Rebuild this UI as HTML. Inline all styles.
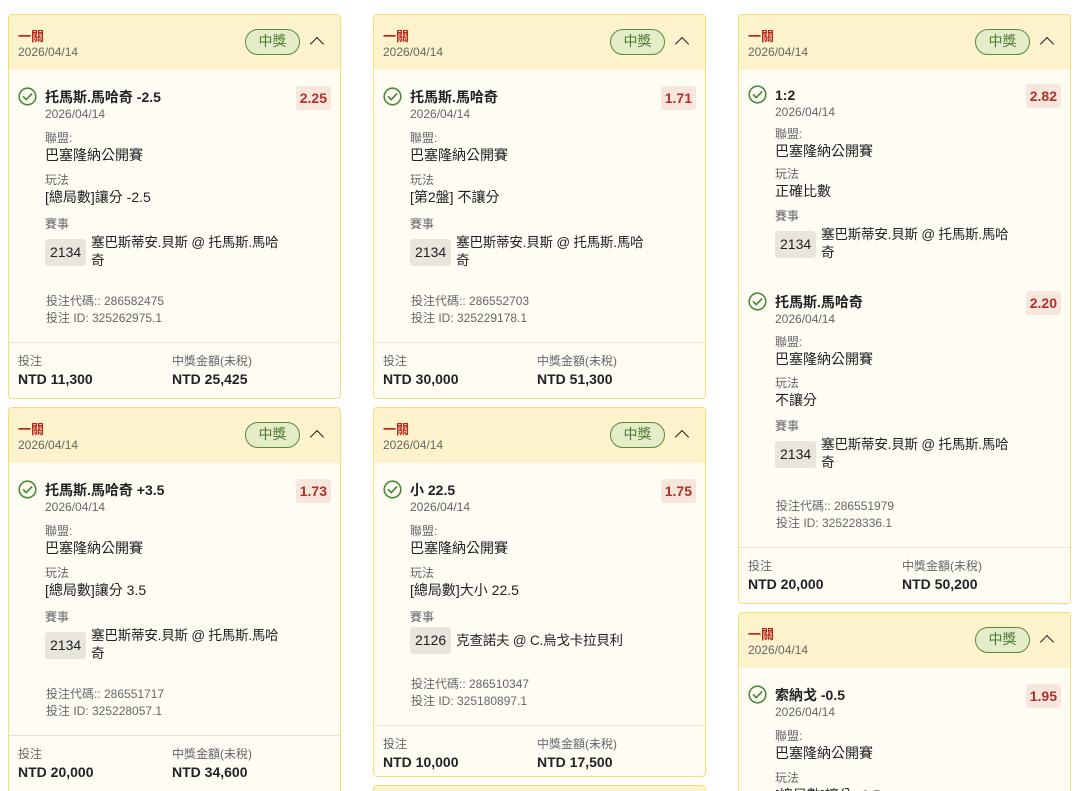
<!DOCTYPE html><html><head><meta charset="utf-8"><style>
*{box-sizing:border-box;margin:0;padding:0}
html,body{width:1080px;height:791px;overflow:hidden}
body{background:#fff;font-family:"Liberation Sans","Noto Sans CJK TC",sans-serif;color:#222;position:relative}
.card{position:absolute;width:333px;border:1.5px solid #f6dd78;border-radius:4px;background:#fffcf4;overflow:hidden}
.hd{height:55px;background:#fcf2cc;position:relative}
.hd .t{position:absolute;left:9px;top:14px;font-size:13px;font-weight:bold;color:#b5291c;line-height:16px}
.hd .d{position:absolute;left:9px;top:29px;font-size:12px;color:#666;line-height:16px}
.badge{position:absolute;left:236px;top:14px;width:55px;height:26px;border:1.6px solid #5a8a3a;border-radius:13px;background:#e4ecc8;color:#4d7a32;font-size:14px;text-align:center;line-height:23px}
.chev{position:absolute;left:303px;top:24px;width:10px;height:10px;border-left:1.6px solid #222;border-top:1.6px solid #222;transform:rotate(45deg)}
.leg{position:relative;padding:18px 0 0 36px}
.leg+.leg{padding-top:31px}
.ck{position:absolute;left:9px;top:17px;width:19px;height:19px}
.leg+.leg .ck{top:30px}
.ti{font-size:14px;font-weight:bold;line-height:18px}
.dt{font-size:12px;color:#666;line-height:16px}
.lb{font-size:12px;color:#666;line-height:16px;margin-top:8px}
.lb.e{margin-top:10px}
.v{font-size:14px;line-height:18px}
.odds{position:absolute;right:9px;top:16px;height:24px;padding:0 4px;background:#f7e6dc;border-radius:3px;color:#b0302a;font-weight:bold;font-size:14px;line-height:24px}
.leg+.leg .odds{top:29px}
.ev{display:flex;align-items:center;margin-top:2px}
.tag{background:#e8e5dc;border-radius:3px;height:27px;line-height:27px;padding:0 5px;font-size:14px;margin-right:5px}
.ev .n{font-size:13.5px;line-height:18px;letter-spacing:-0.2px}
.codes{padding:23px 0 15px 37px;font-size:12px;color:#666;line-height:17px}
.ft{border-top:1.5px solid #e8e4da;display:flex;padding:10px 0 9px 9px;height:55px}
.ft div{width:154px}
.ft .a{font-size:12px;color:#666;line-height:17px}
.ft .b{font-size:14px;font-weight:bold;line-height:18px}
.c3 .lb{margin-top:7px}
.c3 .lb.e{margin-top:9px}
</style></head><body>

<svg width="0" height="0" style="position:absolute"><defs><g id="c"><circle cx="9.5" cy="9.5" r="8.3" fill="none" stroke="#4a8a3a" stroke-width="1.6"/><path d="M5.5 9.8l2.8 2.8 5.3-5.6" fill="none" stroke="#4a8a3a" stroke-width="1.7" stroke-linecap="round" stroke-linejoin="round"/></g></defs></svg>

<div class="card" style="left:8px;top:14px;height:385px">
<div class="hd"><div class="t">一關</div><div class="d">2026/04/14</div><div class="badge">中獎</div><div class="chev"></div></div>
<div class="leg"><svg class="ck"><use href="#c"/></svg><div class="odds">2.25</div>
<div class="ti">托馬斯.馬哈奇 -2.5</div><div class="dt">2026/04/14</div>
<div class="lb">聯盟:</div><div class="v">巴塞隆納公開賽</div>
<div class="lb">玩法</div><div class="v">[總局數]讓分 -2.5</div>
<div class="lb e">賽事</div><div class="ev"><span class="tag">2134</span><span class="n">塞巴斯蒂安.貝斯 @ 托馬斯.馬哈<br>奇</span></div></div>
<div class="codes">投注代碼:: 286582475<br>投注 ID: 325262975.1</div>
<div class="ft"><div><p class="a">投注</p><p class="b">NTD 11,300</p></div><div><p class="a">中獎金額(未稅)</p><p class="b">NTD 25,425</p></div></div>
</div>

<div class="card" style="left:8px;top:407px;height:400px">
<div class="hd"><div class="t">一關</div><div class="d">2026/04/14</div><div class="badge">中獎</div><div class="chev"></div></div>
<div class="leg"><svg class="ck"><use href="#c"/></svg><div class="odds">1.73</div>
<div class="ti">托馬斯.馬哈奇 +3.5</div><div class="dt">2026/04/14</div>
<div class="lb">聯盟:</div><div class="v">巴塞隆納公開賽</div>
<div class="lb">玩法</div><div class="v">[總局數]讓分 3.5</div>
<div class="lb e">賽事</div><div class="ev"><span class="tag">2134</span><span class="n">塞巴斯蒂安.貝斯 @ 托馬斯.馬哈<br>奇</span></div></div>
<div class="codes">投注代碼:: 286551717<br>投注 ID: 325228057.1</div>
<div class="ft"><div><p class="a">投注</p><p class="b">NTD 20,000</p></div><div><p class="a">中獎金額(未稅)</p><p class="b">NTD 34,600</p></div></div>
</div>

<div class="card" style="left:373px;top:14px;height:385px">
<div class="hd"><div class="t">一關</div><div class="d">2026/04/14</div><div class="badge">中獎</div><div class="chev"></div></div>
<div class="leg"><svg class="ck"><use href="#c"/></svg><div class="odds">1.71</div>
<div class="ti">托馬斯.馬哈奇</div><div class="dt">2026/04/14</div>
<div class="lb">聯盟:</div><div class="v">巴塞隆納公開賽</div>
<div class="lb">玩法</div><div class="v">[第2盤] 不讓分</div>
<div class="lb e">賽事</div><div class="ev"><span class="tag">2134</span><span class="n">塞巴斯蒂安.貝斯 @ 托馬斯.馬哈<br>奇</span></div></div>
<div class="codes">投注代碼:: 286552703<br>投注 ID: 325229178.1</div>
<div class="ft"><div><p class="a">投注</p><p class="b">NTD 30,000</p></div><div><p class="a">中獎金額(未稅)</p><p class="b">NTD 51,300</p></div></div>
</div>

<div class="card" style="left:373px;top:407px;height:370px">
<div class="hd"><div class="t">一關</div><div class="d">2026/04/14</div><div class="badge">中獎</div><div class="chev"></div></div>
<div class="leg"><svg class="ck"><use href="#c"/></svg><div class="odds">1.75</div>
<div class="ti">小 22.5</div><div class="dt">2026/04/14</div>
<div class="lb">聯盟:</div><div class="v">巴塞隆納公開賽</div>
<div class="lb">玩法</div><div class="v">[總局數]大小 22.5</div>
<div class="lb e">賽事</div><div class="ev"><span class="tag">2126</span><span class="n">克查諾夫 @ C.烏戈卡拉貝利</span></div></div>
<div class="codes" style="padding-top:22px">投注代碼:: 286510347<br>投注 ID: 325180897.1</div>
<div class="ft"><div><p class="a">投注</p><p class="b">NTD 10,000</p></div><div><p class="a">中獎金額(未稅)</p><p class="b">NTD 17,500</p></div></div>
</div>

<div class="card" style="left:373px;top:785px;height:60px"><div class="hd"></div></div>

<div class="card c3" style="left:738px;top:14px;height:590px">
<div class="hd"><div class="t">一關</div><div class="d">2026/04/14</div><div class="badge">中獎</div><div class="chev"></div></div>
<div class="leg" style="padding-top:16px"><svg class="ck" style="top:15px"><use href="#c"/></svg><div class="odds" style="top:14px">2.82</div>
<div class="ti">1:2</div><div class="dt">2026/04/14</div>
<div class="lb" style="margin-top:6px">聯盟:</div><div class="v">巴塞隆納公開賽</div>
<div class="lb" style="margin-top:6px">玩法</div><div class="v">正確比數</div>
<div class="lb" style="margin-top:8px">賽事</div><div class="ev"><span class="tag">2134</span><span class="n">塞巴斯蒂安.貝斯 @ 托馬斯.馬哈<br>奇</span></div></div>
<div class="leg"><svg class="ck"><use href="#c"/></svg><div class="odds">2.20</div>
<div class="ti">托馬斯.馬哈奇</div><div class="dt">2026/04/14</div>
<div class="lb">聯盟:</div><div class="v">巴塞隆納公開賽</div>
<div class="lb">玩法</div><div class="v">不讓分</div>
<div class="lb e">賽事</div><div class="ev"><span class="tag">2134</span><span class="n">塞巴斯蒂安.貝斯 @ 托馬斯.馬哈<br>奇</span></div></div>
<div class="codes" style="padding-top:26px">投注代碼:: 286551979<br>投注 ID: 325228336.1</div>
<div class="ft"><div><p class="a">投注</p><p class="b">NTD 20,000</p></div><div><p class="a">中獎金額(未稅)</p><p class="b">NTD 50,200</p></div></div>
</div>

<div class="card" style="left:738px;top:612px;height:220px">
<div class="hd"><div class="t">一關</div><div class="d">2026/04/14</div><div class="badge">中獎</div><div class="chev"></div></div>
<div class="leg"><svg class="ck"><use href="#c"/></svg><div class="odds">1.95</div>
<div class="ti">索納戈 -0.5</div><div class="dt">2026/04/14</div>
<div class="lb">聯盟:</div><div class="v">巴塞隆納公開賽</div>
<div class="lb">玩法</div><div class="v">[總局數]讓分 -0.5</div></div>
</div>

</body></html>
